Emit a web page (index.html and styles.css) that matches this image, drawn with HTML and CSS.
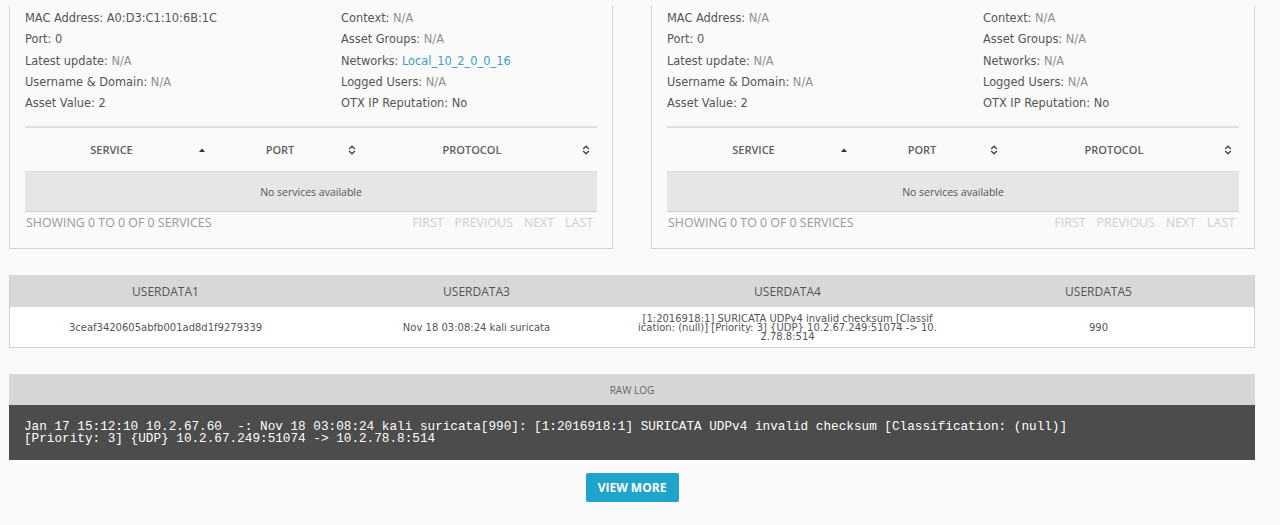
FILE: index.html
```html
<!DOCTYPE html>
<html>
<head>
<meta charset="utf-8">
<link rel="stylesheet" href="styles.css">
</head>
<body>
<div class="page">
  <div class="hosts">
    <section class="box">
      <div class="info">
        <div class="col">
          <div>MAC Address: A0:D3:C1:10:6B:1C</div>
          <div>Port: 0</div>
          <div>Latest update: <span class="na">N/A</span></div>
          <div>Username &amp; Domain: <span class="na">N/A</span></div>
          <div>Asset Value: 2</div>
        </div>
        <div class="col">
          <div>Context: <span class="na">N/A</span></div>
          <div>Asset Groups: <span class="na">N/A</span></div>
          <div>Networks: <a class="link">Local_10_2_0_0_16</a></div>
          <div>Logged Users: <span class="na">N/A</span></div>
          <div>OTX IP Reputation: No</div>
        </div>
      </div>
      <div class="svc">
        <div class="svc-head">
          <div class="th c1"><span>SERVICE</span><svg class="ico" width="8" height="10" viewBox="0 0 8 10"><path d="M1 7 L4 3.5 L7 7 Z" fill="#333"/></svg></div>
          <div class="th c2"><span>PORT</span><svg class="ico" width="8" height="10" viewBox="0 0 8 10"><path d="M1.2 4 L4 1.3 L6.8 4 M1.2 6 L4 8.7 L6.8 6" fill="none" stroke="#444" stroke-width="1.4"/></svg></div>
          <div class="th c3"><span>PROTOCOL</span><svg class="ico" width="8" height="10" viewBox="0 0 8 10"><path d="M1.2 4 L4 1.3 L6.8 4 M1.2 6 L4 8.7 L6.8 6" fill="none" stroke="#444" stroke-width="1.4"/></svg></div>
        </div>
        <div class="svc-empty">No services available</div>
      </div>
      <div class="svc-foot">
        <span>SHOWING 0 TO 0 OF 0 SERVICES</span>
        <nav class="pager"><span>FIRST</span><span>PREVIOUS</span><span>NEXT</span><span>LAST</span></nav>
      </div>
    </section>
    <section class="box">
      <div class="info">
        <div class="col">
          <div>MAC Address: <span class="na">N/A</span></div>
          <div>Port: 0</div>
          <div>Latest update: <span class="na">N/A</span></div>
          <div>Username &amp; Domain: <span class="na">N/A</span></div>
          <div>Asset Value: 2</div>
        </div>
        <div class="col">
          <div>Context: <span class="na">N/A</span></div>
          <div>Asset Groups: <span class="na">N/A</span></div>
          <div>Networks: <span class="na">N/A</span></div>
          <div>Logged Users: <span class="na">N/A</span></div>
          <div>OTX IP Reputation: No</div>
        </div>
      </div>
      <div class="svc">
        <div class="svc-head">
          <div class="th c1"><span>SERVICE</span><svg class="ico" width="8" height="10" viewBox="0 0 8 10"><path d="M1 7 L4 3.5 L7 7 Z" fill="#333"/></svg></div>
          <div class="th c2"><span>PORT</span><svg class="ico" width="8" height="10" viewBox="0 0 8 10"><path d="M1.2 4 L4 1.3 L6.8 4 M1.2 6 L4 8.7 L6.8 6" fill="none" stroke="#444" stroke-width="1.4"/></svg></div>
          <div class="th c3"><span>PROTOCOL</span><svg class="ico" width="8" height="10" viewBox="0 0 8 10"><path d="M1.2 4 L4 1.3 L6.8 4 M1.2 6 L4 8.7 L6.8 6" fill="none" stroke="#444" stroke-width="1.4"/></svg></div>
        </div>
        <div class="svc-empty">No services available</div>
      </div>
      <div class="svc-foot">
        <span>SHOWING 0 TO 0 OF 0 SERVICES</span>
        <nav class="pager"><span>FIRST</span><span>PREVIOUS</span><span>NEXT</span><span>LAST</span></nav>
      </div>
    </section>
  </div>

  <div class="udata">
    <div class="uh">USERDATA1</div>
    <div class="uh">USERDATA3</div>
    <div class="uh">USERDATA4</div>
    <div class="uh">USERDATA5</div>
    <div class="ud">3ceaf3420605abfb001ad8d1f9279339</div>
    <div class="ud">Nov 18 03:08:24 kali suricata</div>
    <div class="ud wrap">[1:2016918:1] SURICATA UDPv4 invalid checksum [Classif<br>ication: (null)] [Priority: 3] {UDP} 10.2.67.249:51074 -&gt; 10.<br>2.78.8:514</div>
    <div class="ud">990</div>
  </div>

  <div class="raw">
    <div class="raw-head">RAW LOG</div>
    <pre class="raw-body">Jan 17 15:12:10 10.2.67.60  -: Nov 18 03:08:24 kali suricata[990]: [1:2016918:1] SURICATA UDPv4 invalid checksum [Classification: (null)]
[Priority: 3] {UDP} 10.2.67.249:51074 -&gt; 10.2.78.8:514</pre>
  </div>

  <div class="more"><button class="btn">VIEW MORE</button></div>
</div>
</body>
</html>
```

FILE: styles.css
```css
html, body {
  margin: 0;
  padding: 0;
  background: #fafafa;
}
.page {
  width: 1246px;
  padding: 6px 0 0 9px;
  font-family: "DejaVu Sans", sans-serif;
  color: #555;
}
.hosts {
  display: flex;
  gap: 38px;
}
.box {
  width: 574px;
  height: 242px;
  border: 1px solid #d2d2d2;
  border-top: none;
  padding: 0 15px;
  display: flex;
  flex-direction: column;
}
.info {
  display: grid;
  grid-template-columns: 316px 1fr;
  padding-top: 2px;
  font-size: 11.4px;
  line-height: 21.3px;
  color: #555;
  margin-bottom: 12px;
}
.na { color: #8f8f8f; }
.link { color: #3a9ec4; text-decoration: none; }
.svc {
  border-top: 2px solid #dedede;
  font-family: "Open Sans", sans-serif;
}
.svc-head {
  display: flex;
  height: 43px;
}
.th {
  display: flex;
  align-items: center;
  font-size: 11px;
  font-weight: 600;
  color: #5e5e5e;
}
.th span {
  flex: 1;
  text-align: center;
}
.th .ico { flex: none; }
.c1 { width: 181px; padding-right: 6px; }
.c2 { width: 144px; padding-right: 6px; }
.c3 { flex: 1; padding-right: 7px; }
.svc-empty {
  height: 39px;
  background: #e6e6e6;
  border-top: 1px solid #e0e0e0;
  border-bottom: 1px solid #cfcfcf;
  display: flex;
  align-items: center;
  justify-content: center;
  font-size: 10.5px;
  color: #555;
}
.svc-foot {
  display: flex;
  justify-content: space-between;
  font-family: "Open Sans", sans-serif;
  font-size: 12.4px;
  line-height: 20px;
  padding: 1px 4px 0 1px;
  color: #999;
}
.pager {
  display: flex;
  gap: 11px;
  color: #cfcfcf;
}
.udata {
  margin-top: 26px;
  display: grid;
  grid-template-columns: repeat(4, 1fr);
  background: #fff;
  border: 1px solid #cfcfcf;
  border-top: none;
}
.uh {
  background: #d8d8d8;
  height: 32px;
  display: flex;
  align-items: center;
  justify-content: center;
  font-family: "Open Sans", sans-serif;
  font-size: 12px;
  color: #555;
}
.ud {
  height: 40px;
  display: flex;
  align-items: center;
  justify-content: center;
  font-size: 10px;
  color: #555;
  text-align: center;
}
.ud.wrap {
  line-height: 9px;
  margin: 0 -12px;
}
.raw {
  margin-top: 26px;
}
.raw-head {
  height: 31px;
  background: #d6d6d6;
  display: flex;
  align-items: center;
  justify-content: center;
  font-family: "Open Sans", sans-serif;
  font-size: 10px;
  color: #666;
}
.raw-body {
  margin: 0;
  background: #4c4c4c;
  color: #fff;
  font-family: "Liberation Mono", monospace;
  font-size: 12.7px;
  line-height: 12px;
  padding: 16px 15px 15px;
  white-space: pre;
}
.more {
  display: flex;
  justify-content: center;
  margin-top: 13px;
}
.btn {
  width: 93px;
  height: 29px;
  border: none;
  border-radius: 2px;
  background: #1fa4cc;
  color: #fff;
  font-family: "Open Sans", sans-serif;
  font-weight: 700;
  font-size: 12px;
  padding: 0;
}
```
